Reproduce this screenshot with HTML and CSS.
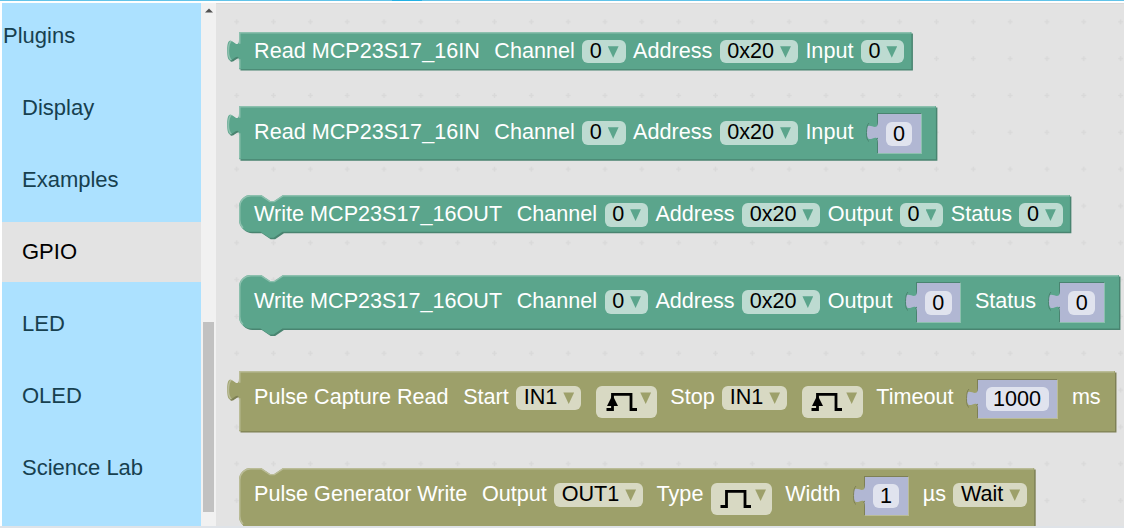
FILE: index.html
```
<!DOCTYPE html>
<html lang="en">
<head>
<meta charset="utf-8">
<title>Blocks</title>
<link rel="stylesheet" href="styles.css">
</head>
<body>
<div class="topline"><span class="topline-active"></span></div>
<main class="editor">
  <nav class="toolbox">
    <div class="category root">Plugins</div>
    <div class="category">Display</div>
    <div class="category">Examples</div>
    <div class="category selected">GPIO</div>
    <div class="category">LED</div>
    <div class="category">OLED</div>
    <div class="category">Science Lab</div>
  </nav>
  <div class="scrollbar">
    <svg class="scroll-up" width="8" height="5" viewBox="0 0 8 5"><path d="M0 4.6 4 .6 8 4.6z"/></svg>
    <div class="thumb"></div>
  </div>
  <section class="workspace">
    <svg class="grid" width="908" height="523">
      <defs>
        <pattern id="dots" width="36.83" height="36.83" patternUnits="userSpaceOnUse" x="2.3" y="-.6">
          <path d="M16 18.4h4.8M18.4 16v4.8"/>
        </pattern>
      </defs>
      <rect width="908" height="523" fill="url(#dots)"/>
    </svg>

    <div class="block green b1">
      <svg class="shape"><g transform="scale(1.474)">
        <path class="dark" transform="translate(1,1)" d="M0 0H456.2V25.2H0V20c0-10-8 8-8-7.5s8 2.5 8-7.5z"/>
        <path class="base" d="M0 0H456.2V25.2H0V20c0-10-8 8-8-7.5s8 2.5 8-7.5z"/>
        <path class="light" d="M.5 24.7V18.5M-5.2 19.2Q-7.3 17.5-7.2 12.5T-5.2 6M.5 8V.5H455.7"/>
      </g></svg>
      <div class="fields">
        <span class="label">Read MCP23S17_16IN&nbsp;</span><span class="label">Channel</span>
        <span class="drop">0<i class="arrow"></i></span><span class="label">Address</span>
        <span class="drop">0x20<i class="arrow"></i></span><span class="label">Input</span>
        <span class="drop">0<i class="arrow"></i></span>
      </div>
    </div>

    <div class="block green b2 tall">
      <svg class="shape"><g transform="scale(1.474)">
        <path class="dark" transform="translate(1,1)" d="M0 0H472.8V36.1H0V20c0-10-8 8-8-7.5s8 2.5 8-7.5z"/>
        <path class="base" d="M0 0H472.8V36.1H0V20c0-10-8 8-8-7.5s8 2.5 8-7.5z"/>
        <path class="light" d="M.5 35.6V18.5M-5.2 19.2Q-7.3 17.5-7.2 12.5T-5.2 6M.5 8V.5H472.3"/>
      </g></svg>
      <div class="fields">
        <span class="label">Read MCP23S17_16IN&nbsp;</span><span class="label">Channel</span>
        <span class="drop">0<i class="arrow"></i></span><span class="label">Address</span>
        <span class="drop">0x20<i class="arrow"></i></span><span class="label">Input</span>
        <span class="socket"><svg class="plug" width="12" height="23" viewBox="0 0 12 23"><path d="M12 .5C12 14-.1-4 .5 11.5S12 8 12 22.5"/><path class="plug-edge" d="M3 2Q.6 4 .5 11.5T3 20.5M10 18.5 12 17"/></svg><span class="value">0</span></span>
      </div>
    </div>

    <div class="block green b3">
      <svg class="shape"><g transform="scale(1.474)">
        <path class="dark" transform="translate(1,1)" d="M0 8A8 8 0 0 1 8 0H15l6 4h3l6-4H563.7V25H29.5l-6 4h-3l-6-4H8a8 8 0 0 1-8-8z"/>
        <path class="base" d="M0 8A8 8 0 0 1 8 0H15l6 4h3l6-4H563.7V25H29.5l-6 4h-3l-6-4H8a8 8 0 0 1-8-8z"/>
        <path class="light" d="M2.7 22.3A7.5 7.5 0 0 1 .5 17V8A7.5 7.5 0 0 1 8 .5H15l6 4h3l6-4H563.2"/>
      </g></svg>
      <div class="fields">
        <span class="label">Write MCP23S17_16OUT&nbsp;</span><span class="label">Channel</span>
        <span class="drop">0<i class="arrow"></i></span><span class="label">Address</span>
        <span class="drop">0x20<i class="arrow"></i></span><span class="label">Output</span>
        <span class="drop">0<i class="arrow"></i></span><span class="label">Status</span>
        <span class="drop">0<i class="arrow"></i></span>
      </div>
    </div>

    <div class="block green b4 tall">
      <svg class="shape"><g transform="scale(1.474)">
        <path class="dark" transform="translate(1,1)" d="M0 8A8 8 0 0 1 8 0H15l6 4h3l6-4H597V36.3H29.5l-6 4h-3l-6-4H8a8 8 0 0 1-8-8z"/>
        <path class="base" d="M0 8A8 8 0 0 1 8 0H15l6 4h3l6-4H597V36.3H29.5l-6 4h-3l-6-4H8a8 8 0 0 1-8-8z"/>
        <path class="light" d="M2.7 33.6A7.5 7.5 0 0 1 .5 28.3V8A7.5 7.5 0 0 1 8 .5H15l6 4h3l6-4H596.5"/>
      </g></svg>
      <div class="fields">
        <span class="label">Write MCP23S17_16OUT&nbsp;</span><span class="label">Channel</span>
        <span class="drop">0<i class="arrow"></i></span><span class="label">Address</span>
        <span class="drop">0x20<i class="arrow"></i></span><span class="label">Output</span>
        <span class="socket"><svg class="plug" width="12" height="23" viewBox="0 0 12 23"><path d="M12 .5C12 14-.1-4 .5 11.5S12 8 12 22.5"/><path class="plug-edge" d="M3 2Q.6 4 .5 11.5T3 20.5M10 18.5 12 17"/></svg><span class="value">0</span></span>
        <span class="label">Status</span>
        <span class="socket"><svg class="plug" width="12" height="23" viewBox="0 0 12 23"><path d="M12 .5C12 14-.1-4 .5 11.5S12 8 12 22.5"/><path class="plug-edge" d="M3 2Q.6 4 .5 11.5T3 20.5M10 18.5 12 17"/></svg><span class="value">0</span></span>
      </div>
    </div>

    <div class="block olive b5">
      <svg class="shape"><g transform="scale(1.474)">
        <path class="dark" transform="translate(1,1)" d="M0 0H594.3V40.8H0V20c0-10-8 8-8-7.5s8 2.5 8-7.5z"/>
        <path class="base" d="M0 0H594.3V40.8H0V20c0-10-8 8-8-7.5s8 2.5 8-7.5z"/>
        <path class="light" d="M.5 40.3V18.5M-5.2 19.2Q-7.3 17.5-7.2 12.5T-5.2 6M.5 8V.5H593.8"/>
      </g></svg>
      <div class="fields">
        <span class="label">Pulse Capture Read&nbsp;</span><span class="label">Start</span>
        <span class="drop">IN1<i class="arrow"></i></span>
        <span class="drop picture spaced"><svg class="wave" width="32" height="22" viewBox="0 0 32 22"><path d="M.5 19.5H6.5V4.3H25V19.5H31"/><path class="head" d="M6.5 5 12 16H1z"/></svg><i class="arrow"></i></span>
        <span class="label after-picture">Stop</span>
        <span class="drop">IN1<i class="arrow"></i></span>
        <span class="drop picture spaced"><svg class="wave" width="32" height="22" viewBox="0 0 32 22"><path d="M.5 19.5H6.5V4.3H25V19.5H31"/><path class="head" d="M6.5 5 12 16H1z"/></svg><i class="arrow"></i></span>
        <span class="label after-picture">Timeout</span>
        <span class="socket"><svg class="plug" width="12" height="23" viewBox="0 0 12 23"><path d="M12 .5C12 14-.1-4 .5 11.5S12 8 12 22.5"/><path class="plug-edge" d="M3 2Q.6 4 .5 11.5T3 20.5M10 18.5 12 17"/></svg><span class="value">1000</span></span>
        <span class="label">ms</span>
      </div>
    </div>

    <div class="block olive b6">
      <svg class="shape"><g transform="scale(1.474)">
        <path class="dark" transform="translate(1,1)" d="M0 8A8 8 0 0 1 8 0H15l6 4h3l6-4H539.5V40.8H29.5l-6 4h-3l-6-4H8a8 8 0 0 1-8-8z"/>
        <path class="base" d="M0 8A8 8 0 0 1 8 0H15l6 4h3l6-4H539.5V40.8H29.5l-6 4h-3l-6-4H8a8 8 0 0 1-8-8z"/>
        <path class="light" d="M2.7 38.1A7.5 7.5 0 0 1 .5 32.8V8A7.5 7.5 0 0 1 8 .5H15l6 4h3l6-4H539"/>
      </g></svg>
      <div class="fields">
        <span class="label">Pulse Generator Write&nbsp;</span><span class="label">Output</span>
        <span class="drop">OUT1<i class="arrow"></i></span>
        <span class="label after-picture">Type</span>
        <span class="drop picture"><svg class="wave" width="32" height="22" viewBox="0 0 32 22"><path d="M.5 19.5H6.5V4.3H25V19.5H31"/></svg><i class="arrow"></i></span>
        <span class="label after-picture">Width</span>
        <span class="socket"><svg class="plug" width="12" height="23" viewBox="0 0 12 23"><path d="M12 .5C12 14-.1-4 .5 11.5S12 8 12 22.5"/><path class="plug-edge" d="M3 2Q.6 4 .5 11.5T3 20.5M10 18.5 12 17"/></svg><span class="value">1</span></span>
        <span class="label">µs</span>
        <span class="drop">Wait<i class="arrow"></i></span>
      </div>
    </div>
  </section>
</main>
</body>
</html>
```

FILE: styles.css
```
* { box-sizing: border-box; }
body {
  margin: 0;
  width: 1124px;
  height: 528px;
  overflow: hidden;
  display: flex;
  flex-direction: column;
  background: #fff;
  font-family: "Liberation Sans", Arial, sans-serif;
}
.topline { height: 1px; background: #62c3e8; flex: none; }
.topline-active { display: block; width: 30px; height: 1px; margin-left: 392px; background: #22b0e3; }
.editor {
  display: flex;
  height: 525px;
  flex: none;
  border-top: 2px solid #fff;
  border-left: 2px solid #fff;
  margin-bottom: 2px;
  box-shadow: 0 2px 0 #dfe3e8;
}
.toolbox { width: 199px; background: #ace1ff; padding-top: 3px; flex: none; }
.category {
  height: 60px;
  margin-bottom: 12px;
  padding-left: 20px;
  line-height: 59px;
  font-size: 22px;
  color: #17404f;
  white-space: nowrap;
}
.category.root { padding-left: 1px; }
.category.selected { background: #e3e3e3; color: #000; }
.scrollbar {
  width: 15px;
  background: #f1f1f1;
  flex: none;
  display: flex;
  flex-direction: column;
  align-items: center;
}
.scroll-up { margin-top: 5px; fill: #505050; flex: none; }
.thumb { width: 11px; height: 190px; margin-top: 309px; background: #c1c1c1; }
.workspace {
  position: relative;
  width: 908px;
  overflow: hidden;
  background: #e3e3e3;
  border-top: 1px solid #d9d9d9;
}
.grid { display: block; }
.grid path { stroke: #d9d9d9; stroke-width: 1.5; }

/* Blocks sit at free positions on the workspace canvas. */
.block { position: absolute; left: 23.4px; }
.b1 { top: 28.3px; }
.b2 { top: 102.2px; }
.b3 { top: 191.4px; }
.b4 { top: 271.2px; }
.b5 { top: 367.3px; }
.b6 { top: 464.3px; }
.green { --base: #5ba58c; --dark: #498470; --light: #8cc0ae; --field: #bddbd1; }
.olive { --base: #9da06a; --dark: #7e8055; --light: #babc97; --field: #d8d9c3; }
.shape { position: absolute; left: 0; top: 0; width: 890px; height: 70px; overflow: visible; }
.base { fill: var(--base); }
.dark { fill: var(--dark); }
.light { fill: none; stroke: var(--light); stroke-width: 1; }

.fields {
  position: relative;
  display: flex;
  align-items: flex-start;
  gap: 7.4px;
  padding: 7.6px 0 0 14.7px;
  font-size: 21.6px;
  line-height: 23.6px;
  color: #fff;
  white-space: nowrap;
}
.tall .fields { padding-top: 14.8px; }
.b5 .fields, .b6 .fields { padding-top: 14.8px; }
.label { height: 23.6px; margin-top: -1.4px; }
.b3 .label { margin-top: -.6px; }
.b3 .drop { line-height: 22px; }
.label:first-child { margin-right: 1.2px; }
.after-picture { margin-left: 6px; }
.drop {
  display: flex;
  height: 23.6px;
  padding: 0 7.1px 0 7.6px;
  border-radius: 5.9px;
  background: var(--field);
  color: #000;
  line-height: 21px;
}
.arrow {
  width: 10.8px;
  height: 11.6px;
  margin: 6.3px 0 0 6px;
  background: var(--base);
  clip-path: polygon(0 0, 100% 0, 50% 100%);
}
.picture { height: 32.4px; padding-left: 9.6px; width: 61px; }
.picture .arrow { margin-left: 2.8px; flex: none; }
.spaced { margin-left: 7.3px; }
.wave { margin-top: 4px; flex: none; fill: none; stroke: #000; stroke-width: 2.8; }
.wave .head { fill: #000; stroke: none; }
.socket {
  position: relative;
  display: flex;
  width: auto;
  height: 40.5px;
  margin: -7.6px 6.3px 0 15.8px;
  padding: 7.8px 8.7px 0 8px;
  background: #b1b7d3;
  border: 1px solid var(--light);
  border-top-color: var(--dark);
  border-left-color: var(--dark);
}
.plug { position: absolute; left: -12px; top: 7px; fill: #b1b7d3; }
.plug-edge { fill: none; stroke: var(--dark); stroke-width: 1; }
.value {
  height: 23.6px;
  padding: 0 7.4px;
  border-radius: 5.9px;
  background: #e0e3ee;
  color: #000;
  line-height: 23px;
}
```
